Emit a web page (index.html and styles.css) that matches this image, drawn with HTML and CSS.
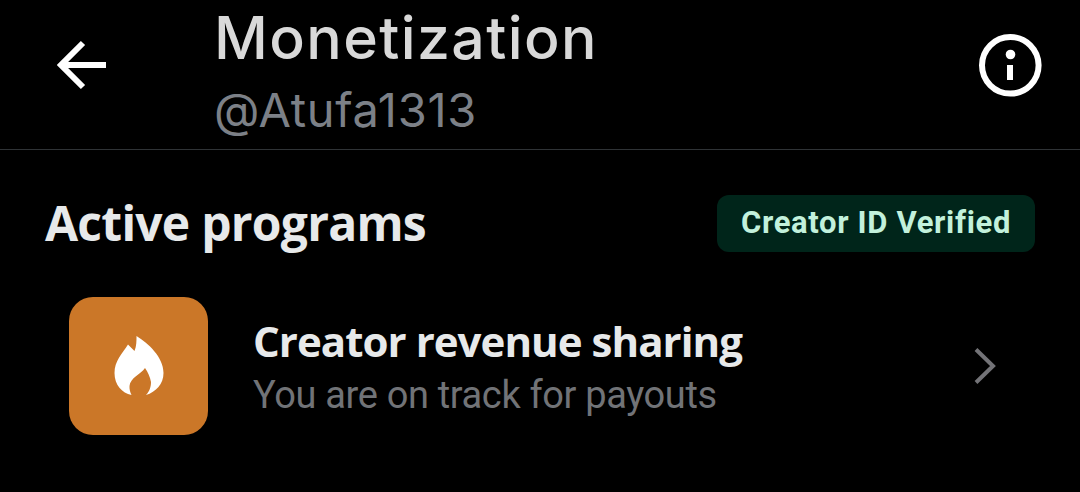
FILE: index.html
```html
<!DOCTYPE html>
<html lang="en">
<head>
  <meta charset="UTF-8">
  <meta name="viewport" content="width=device-width, initial-scale=1.0">
  <title>Monetization</title>
  <link rel="stylesheet" href="styles.css">
</head>
<body>
  <header class="header">
    <svg class="back-icon" viewBox="0 0 50 50" fill="none" stroke="#fff" stroke-width="6">
      <path d="M49 25H5M26 3L4 25L26 47"/>
    </svg>
    <div class="header-text">
      <h1 class="title">Monetization</h1>
      <p class="handle">@Atufa1313</p>
    </div>
    <svg class="info-icon" viewBox="0 0 64 64">
      <circle cx="32.300" cy="32.300" r="28.300" fill="none" stroke="#fff" stroke-width="6"/>
      <circle cx="32.500" cy="21.500" r="4.800" fill="#fff"/>
      <path d="M29 32h6v15h-6z" fill="#fff"/>
    </svg>
  </header>

  <main class="content">
    <div class="section-head">
      <h2 class="section-title">Active programs</h2>
      <span class="badge">Creator ID Verified</span>
    </div>
    <div class="program">
      <div class="program-icon">
        <svg class="flame" viewBox="0 0 50 60" fill="#fff">
          <path d="M22.500 0C34 7 49.500 21 49.500 37C49.500 48 42 56 32 59C36 55 37 50 37 46C36 41 34 36 31 32C27 38 16 42 15.500 50C15.300 53 16 56 17.500 59C8 57 0.500 49 0.500 37C0.500 25 8 18 14 8.500L20.500 15C22.500 10 22.500 5 22.500 0Z"/>
        </svg>
      </div>
      <div class="program-text">
        <h3 class="program-title">Creator revenue sharing</h3>
        <p class="program-status">You are on track for payouts</p>
      </div>
      <svg class="chevron" viewBox="0 0 24 38" fill="none" stroke="#737377" stroke-width="4">
        <path d="M2 2.500L19 19L2 35.500"/>
      </svg>
    </div>
  </main>
</body>
</html>
```
FILE: styles.css
```css
* {
  box-sizing: border-box;
}
body {
  margin: 0;
  background-color: #000;
  color: #e7e9ea;
  font-family: Roboto, sans-serif;
}
h1, h2, h3, p {
  margin: 0;
  white-space: nowrap;
}
svg {
  display: block;
  flex-shrink: 0;
}
/* Top bar */
.header {
  display: flex;
  align-items: flex-start;
  height: 150px;
  padding: 2px 38px 0 57px;
  border-bottom: 1px solid #2f3336;
  font-family: Inter, sans-serif;
}
.back-icon {
  width: 50px;
  height: 50px;
  margin-top: 38px;
}
.header-text {
  flex: 1;
  margin-left: 107px;
}
.title {
  font-size: 59px;
  font-weight: 500;
  line-height: 72px;
  letter-spacing: 1.4px;
  color: #d9d9d9;
}
.handle {
  margin-top: 6px;
  font-size: 47px;
  line-height: 60px;
  letter-spacing: 0.7px;
  color: #7c8087;
}
.info-icon {
  width: 64px;
  height: 64px;
  margin-top: 31px;
}
/* Programs */
.content {
  padding: 45px 45px 0;
}
.section-head {
  display: flex;
  justify-content: space-between;
  height: 57px;
}
.section-title {
  font-family: "Open Sans", sans-serif;
  font-size: 48px;
  font-weight: 700;
  line-height: 55px;
  letter-spacing: -0.75px;
}
.badge {
  width: 318px;
  height: 57px;
  border-radius: 12px;
  background-color: #00251a;
  color: #c2f1dc;
  font-size: 31px;
  font-weight: 700;
  line-height: 56px;
  letter-spacing: 0.65px;
  text-align: center;
  white-space: nowrap;
}
.program {
  display: flex;
  align-items: center;
  height: 138px;
  margin-top: 45px;
  padding: 0 37px 0 24px;
}
.program-icon {
  display: flex;
  align-items: center;
  justify-content: center;
  width: 139px;
  height: 138px;
  border-radius: 24px;
  background-color: #cb7728;
}
.flame {
  width: 50px;
  height: 60px;
}
.program-text {
  flex: 1;
  margin-left: 45px;
  padding-top: 2px;
}
.program-title {
  font-family: "Open Sans", sans-serif;
  font-size: 42px;
  font-weight: 700;
  line-height: 50px;
  letter-spacing: -0.95px;
}
.program-status {
  margin-top: 5px;
  font-size: 38px;
  line-height: 48px;
  letter-spacing: -0.35px;
  color: #717377;
}
.chevron {
  width: 24px;
  height: 38px;
}
```
